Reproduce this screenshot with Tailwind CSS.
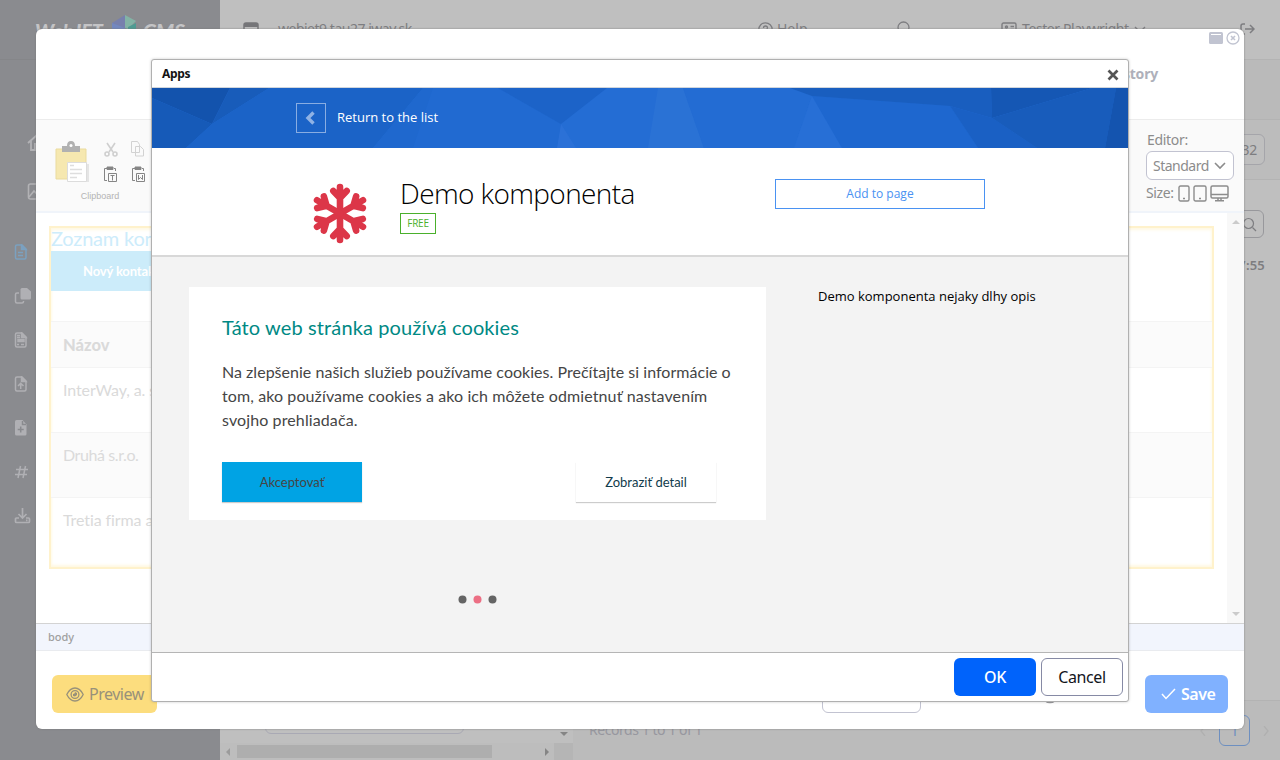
<!DOCTYPE html>
<html lang="en">
<head>
<meta charset="utf-8">
<title>WebJET CMS</title>
<script src="https://cdn.jsdelivr.net/npm/@tailwindcss/browser@4"></script>
</head>
<body class="relative h-[760px] w-[1280px] overflow-hidden bg-[#bfbfbf] font-['Noto_Sans','Open_Sans',sans-serif] text-sm">

<!-- Page under the dialogs -->
<div class="flex h-full">
  <aside class="flex w-[220px] shrink-0 flex-col bg-[#8a8b8f]">
    <div class="flex h-[60px] items-start border-b border-[#858689] pt-[15px] pl-[35px]">
      <svg width="152" height="26" viewBox="0 0 152 26"><g font-family="Lato" font-style="italic" font-weight="900" font-size="19" fill="#c4c4c6"><text x="0" y="23" textLength="68" lengthAdjust="spacingAndGlyphs">WebJET</text><text x="108" y="23" textLength="42" lengthAdjust="spacingAndGlyphs">CMS</text></g><path d="M90 0 77 8v12l13-7z" fill="#7780ad"/><path d="M90 0l11 6-8 8-3-1z" fill="#83b3a5"/><path d="M77 8l13 5v10l-13-5z" fill="#7388c0"/><path d="M93 12l8-4v8l-8 5z" fill="#4e9b92"/></svg>
    </div>
    <div class="flex flex-col gap-[30px] pt-[73px] pl-[27px] text-[#b2b2b5]">
      <svg width="22" height="20" viewBox="0 0 22 20" fill="none" stroke="currentColor" stroke-width="1.800"><path d="M1 10 10 2l9 8M4 8v9h4v-6h4v6h4V8"/></svg>
      <svg width="20" height="18" viewBox="0 0 20 18" fill="none" stroke="currentColor" stroke-width="1.600"><rect x="1.500" y="1" width="17" height="15" rx="2"/><path d="m2 14 5-6 4 4 3-3 5 5"/></svg>
    </div>
    <div class="flex flex-col gap-7 pt-[43px] pl-[14px] text-[#b0b0b4]">
      <svg class="text-[#7ba1c0]" width="16" height="16" viewBox="0 0 16 16" fill="none" stroke="currentColor" stroke-width="1.500"><path d="M3 1h5l4 4v8.500q0 1.500-1.500 1.500H3q-1.500 0-1.500-1.500v-11Q1.500 1 3 1zM4 8.500h5M4 11.500h5"/><path d="M7.500 1v4.500H12z" fill="currentColor"/></svg>
      <svg width="17" height="16" viewBox="0 0 17 16" fill="currentColor"><path d="M8 0h5l4 3.500V10q0 1.500-1.500 1.500H8Q6.500 11.500 6.500 10V1.500Q6.500 0 8 0z"/><path d="M5 5H3q-1.500 0-1.500 1.500v7Q1.500 15 3 15h5q1.500 0 1.500-1.500V13" fill="none" stroke="currentColor" stroke-width="1.500"/></svg>
      <svg width="16" height="16" viewBox="0 0 16 16" fill="none" stroke="currentColor" stroke-width="1.500"><path d="M3 1h5l4 4v8.500q0 1.500-1.500 1.500H3q-1.500 0-1.500-1.500v-11Q1.500 1 3 1zM3 3.500h3M3 5.500h3M3 12.500h2M7 12.500h3"/><path d="M4 7.500h6v2H4z" fill="currentColor"/><path d="M7.500 1v4.500H12z" fill="currentColor"/></svg>
      <svg width="16" height="16" viewBox="0 0 16 16" fill="none" stroke="currentColor" stroke-width="1.500"><path d="M3 1h5l4 4v8.500q0 1.500-1.500 1.500H3q-1.500 0-1.500-1.500v-11Q1.500 1 3 1zM6.700 13V7.500M4 10l2.700-2.700L9.500 10"/><path d="M7.500 1v4.500H12z" fill="currentColor"/></svg>
      <svg width="16" height="16" viewBox="0 0 16 16"><path d="M2.500 0h6l4 4.500v9.500q0 1.500-1.500 1.500H2.500Q1 15.500 1 14V1.500Q1 0 2.500 0z" fill="currentColor"/><path d="M8.500 1v3.500H12M6.700 6.500v6M3.700 9.500h6" stroke="#8a8b8f" stroke-width="1.500" fill="none"/></svg>
      <svg width="16" height="16" viewBox="0 0 16 16" fill="none" stroke="currentColor" stroke-width="1.500"><path d="M2 5.500h12M1 10.500h12M6.500 2l-2.500 12M11.500 2 9 14"/></svg>
      <svg width="17" height="16" viewBox="0 0 17 16" fill="none" stroke="currentColor" stroke-width="1.700"><path d="M8.500 0v9.500M4.500 6l4 4 4-4M5 10H2.500Q1.500 10 1.500 11v2.500q0 1 1 1h12q1 0 1-1V11q0-1-1-1H12M12 12.400h1.500"/></svg>
    </div>
  </aside>
  <main class="flex flex-1 flex-col bg-[#bababa] text-[#7d7d80]">
    <header class="flex h-[60px] shrink-0 items-start border-b border-[#b3b3b3] bg-[#bfbfbf] pt-[19px] pl-[23px]">
      <svg class="mt-[3px] w-[16px] shrink-0" height="16" viewBox="0 0 16 16"><rect x="1" y="1" width="14" height="13" rx="2" fill="none" stroke="#757578" stroke-width="1.500"/><path d="M1 1h14v4H1z" fill="#757578"/></svg>
      <span class="ml-[19px] w-[480px] tracking-[-0.500px]">webjet9.tau27.iway.sk</span>
      <svg class="mt-[3px] mr-[4px] shrink-0" width="15" height="15" viewBox="0 0 15 15" fill="none" stroke="currentColor" stroke-width="1.300"><circle cx="7.500" cy="7.500" r="6.700"/><path d="M5.500 6q0-2 2-2t2 2q0 1-2 2v1M7.500 10.500v1.500"/></svg>
      <span class="w-[120px]">Help</span>
      <svg class="mt-[2px] shrink-0" width="16" height="16" viewBox="0 0 16 16" fill="none" stroke="currentColor" stroke-width="1.300"><circle cx="6.500" cy="6.500" r="5.500"/><path d="m11 11 4 4"/></svg>
      <svg class="mt-[3px] mr-[5px] ml-[88px] shrink-0" width="16" height="14" viewBox="0 0 16 14" fill="none" stroke="currentColor" stroke-width="1.400"><rect x="1" y="1" width="14" height="12" rx="1.500"/><circle cx="5.500" cy="5" r="1"/><path d="M3.500 9h4M9.500 4.500H13M9.500 7.500H13"/></svg>
      <span class="tracking-[-0.400px]">Tester Playwright</span>
      <svg class="mt-[7px] ml-[5px] shrink-0" width="12" height="8" viewBox="0 0 12 8" fill="none" stroke="currentColor" stroke-width="1.400"><path d="m1 1 5 5 5-5"/></svg>
      <svg class="mt-[4px] mr-[25px] ml-auto shrink-0" width="15" height="13" viewBox="0 0 15 13" fill="none" stroke="currentColor" stroke-width="1.500"><path d="M5 1H3Q1 1 1 3v6q0 2 2 2h2M5 6h9M10 2l4 4-4 4"/></svg>
    </header>
    <div class="h-[60px] shrink-0 border-b border-[#b3b3b3]"></div>
    <div class="flex h-[60px] shrink-0 items-center justify-end border-b border-[#b3b3b3] bg-[#bcbcbc] pr-[15px]"><span class="flex h-[31px] w-[60px] items-center justify-end rounded-md border border-[#a5a5aa] bg-[#bfbfbf] pr-[7px] tracking-[-0.300px]">32</span></div>
    <div class="flex flex-1 flex-col items-end bg-[#bfbfbf] pt-[30px] pr-[16px]">
      <span class="flex h-[28px] w-[40px] items-center justify-end rounded-md border border-[#98989c] pr-[6px]"><svg width="15" height="15" viewBox="0 0 15 15" fill="none" stroke="currentColor" stroke-width="1.200"><circle cx="6.500" cy="6.500" r="5"/><path d="m10.500 10.500 3.500 3.500"/></svg></span>
      <span class="mt-[17px] -mr-px text-[13px] leading-5 font-semibold tracking-[0.200px]">17:55</span>
    </div>
    <div class="flex h-[60px] shrink-0 border-t border-[#b3b3b3] bg-[#bbbbbb]">
      <div class="flex w-[353px] shrink-0 flex-col">
        <div class="flex h-[42px] items-end bg-[#bfbfbf] pb-[9px]">
          <div class="ml-[45px] h-[28px] w-[199px] rounded-md border border-[#a9a9b4]"></div>
          <svg class="mb-[-3px] ml-auto mr-[5px]" width="8" height="5" viewBox="0 0 8 5"><path d="M0 0h8L4 4z" fill="#858585"/></svg>
        </div>
        <div class="flex flex-1 items-center bg-[#bdbdbd]">
          <svg class="ml-[6px]" width="4" height="8" viewBox="0 0 4 8"><path d="M4 0v8L0 4z" fill="#9b9b9b"/></svg>
          <div class="ml-[7px] h-[13px] w-[255px] bg-[#aeaeae]"></div>
          <svg class="ml-auto mr-[5px]" width="4" height="8" viewBox="0 0 4 8"><path d="M0 0v8l4-4z" fill="#858585"/></svg>
          <div class="h-full w-[19px] bg-[#b5b5b5]"></div>
        </div>
      </div>
      <span class="mt-[19px] ml-[16px] text-[14px] tracking-[-0.450px] text-[#97979f]">Records 1 to 1 of 1</span>
      <div class="mt-[14px] ml-auto flex items-center gap-[13px] self-start pr-[11px]">
        <svg width="6" height="10" viewBox="0 0 6 10" fill="none" stroke="#b0b0b0" stroke-width="1.300"><path d="M5 0 1 5l4 5"/></svg>
        <span class="flex h-[31px] w-[31px] items-center justify-center rounded-md border border-[#6d8fc0] text-[#6d8fc0]">1</span>
        <svg width="6" height="10" viewBox="0 0 6 10" fill="none" stroke="#b0b0b0" stroke-width="1.300"><path d="m1 0 4 5-4 5"/></svg>
      </div>
    </div>
  </main>
</div>

<!-- Editor dialog -->
<section class="absolute top-[29px] left-[36px] flex h-[700px] w-[1208px] flex-col overflow-hidden rounded-md bg-white shadow-[0_0_2px_#777]">
  <header class="h-[90px] shrink-0">
    <div class="flex justify-end gap-[3px] pt-[2px] pr-[4.500px]">
      <svg width="14" height="14" viewBox="0 0 14 14"><rect y="1" width="14" height="12" rx="1.500" fill="#c1c4d1"/><path d="M2 3.500h10" stroke="#fff"/></svg>
      <svg width="14" height="14" viewBox="0 0 14 14" fill="none" stroke="#c1c4d1" stroke-width="1.300"><circle cx="7" cy="7" r="6"/><path d="m5 5 4 4m0-4-4 4" stroke-width="1.600"/></svg>
    </div>
    <div class="flex justify-end pt-[19px] pr-[86px] text-[14px] leading-5 font-bold tracking-[-0.200px] text-[#aeb0ba]">History</div>
  </header>
  <div class="flex h-[94px] shrink-0 justify-between border-t border-b-2 border-t-[#ececec] border-b-[#f0f4fa] bg-[#fafafa]">
    <div class="flex w-[128px] flex-col pt-[21px]">
      <div class="flex gap-[14px] pl-[19px]">
        <svg class="shrink-0" width="34" height="42" viewBox="0 0 34 42"><path d="M1 8h30v30H1z" fill="#f6e8b0" stroke="#eadb9e"/><path d="M7 5h5q0-5 4-5t4 5h5v6H7z" fill="#b1b1b1"/><circle cx="16" cy="4.500" r="1.500" fill="#fff"/><path d="M14 23h20v18H14z" fill="#e5e5e5"/><path d="M12.500 21.500h19v19h-19z" fill="#fff" stroke="#dcdcdc"/><path d="M15 24.500h4M15 28.500h12M15 32.500h12M15 36.500h7" stroke="#dedede" stroke-width="1.500"/></svg>
        <div class="grid grid-cols-[16px_16px] gap-x-[12px] gap-y-[8px]">
          <svg width="16" height="17" viewBox="0 0 16 17" fill="none" stroke="#cfcfcf" stroke-width="1.600"><path d="m4 2 6 9M12 2l-6 9"/><circle cx="4" cy="13" r="2"/><circle cx="12" cy="13" r="2"/></svg>
          <svg width="16" height="17" viewBox="0 0 16 17" fill="#fafafa" stroke="#d2d2d2"><path d="M.500.500h6l2 3v8h-8zM4.500 5.500h5l3 3v6.500h-8z"/></svg>
          <svg width="16" height="17" viewBox="0 0 16 17" fill="none" stroke="#858585"><path d="M4 2.500H1.500v12H4M11 2.500h1.500V5"/><path d="M4 1h6v2.500H4z" fill="#858585"/><path d="M5.500 7.500h8v8h-8zM7.500 9.500h4M9.500 9.500v5"/></svg>
          <svg width="16" height="17" viewBox="0 0 16 17" fill="none" stroke="#858585"><path d="M4 2.500H1.500v12H4M11 2.500h1.500V5"/><path d="M4 1h6v2.500H4z" fill="#858585"/><path d="M5.500 7.500h8v8h-8zM7.500 9v4.500l2-2 2 2V9"/></svg>
        </div>
      </div>
      <span class="mt-[7px] text-center text-[9px] leading-3 font-['Liberation_Sans',Arial,sans-serif] text-[#b4b4b4]">Clipboard</span>
    </div>
    <div class="flex w-[98px] flex-col pt-[11px] text-[14px] leading-[18px] text-[#8c8c8c]">
      <span class="pl-px tracking-[-0.300px]">Editor:</span>
      <span class="mt-[2px] flex h-[29px] w-[88px] items-center justify-between rounded-md border border-[#c2c3d1] bg-white pr-[7px] pl-[6px] tracking-[-0.500px]">Standard<svg width="12" height="8" viewBox="0 0 12 8" fill="none" stroke="currentColor" stroke-width="1.600"><path d="m1 1 5 5 5-5"/></svg></span>
      <span class="mt-[4px] flex items-center gap-[3px] tracking-[-0.400px]">Size:
        <svg class="ml-px" width="12" height="17" viewBox="0 0 12 17" fill="none" stroke="currentColor" stroke-width="1.400"><rect x="1" y="1" width="10" height="15" rx="1.500"/><path d="M5 13.500h2"/></svg>
        <svg width="14" height="17" viewBox="0 0 14 17" fill="none" stroke="currentColor" stroke-width="1.400"><rect x="1" y="1" width="12" height="15" rx="1.500"/><path d="M6 13.500h2"/></svg>
        <svg width="19" height="17" viewBox="0 0 19 17" fill="none" stroke="currentColor" stroke-width="1.500"><rect x="1" y="1" width="17" height="12" rx="1.500"/><path d="M1 9.500h17M8 13v3M11 13v3M5 15.800h9"/></svg>
      </span>
    </div>
  </div>
  <div class="flex h-[410px] shrink-0">
    <div class="flex-1 pt-[13px] pr-[13px] pl-[13px] font-[Lato,'Noto_Sans',sans-serif] text-[#dadada]">
      <div class="flex h-[343px] flex-col border-2 border-[#fff2cc] shadow-[inset_0_2px_3px_#fff8e2,inset_0_-2px_3px_#fff8e2]">
        <h1 class="h-[23px] text-[20px] leading-[21px] tracking-[-0.200px] text-[#cdecfb]">Zoznam kontaktov</h1>
        <div class="h-[40px] w-[166px] bg-[#ccecfa] pl-[32px] text-[13px] leading-10 font-bold tracking-[-0.150px] text-white">Nový kontakt</div>
        <div class="mt-[30px] h-[47px] border-y border-[#f4f4f4] bg-[#fbfbfb] pl-[12px] text-[16.500px] leading-[46px] font-black">Názov</div>
        <div class="h-[64px] pt-[10px] pl-[12px] text-[16px] leading-6 tracking-[-0.100px]">InterWay, a. s.</div>
        <div class="h-[66px] border-y border-[#f4f4f4] bg-[#fbfbfb] pt-[10px] pl-[12px] text-[16px] leading-6 tracking-[-0.400px]">Druhá s.r.o.</div>
        <div class="pt-[10px] pl-[12px] text-[16px] leading-6 tracking-[-0.100px]">Tretia firma a.s.</div>
      </div>
    </div>
    <div class="flex w-[17px] flex-col items-center justify-between bg-[#f8f8f8] py-[7px]">
      <svg width="8" height="4" viewBox="0 0 8 4"><path d="M0 4 4 0l4 4z" fill="#cbcbcb"/></svg>
      <svg width="8" height="4" viewBox="0 0 8 4"><path d="M0 0h8L4 4z" fill="#cbcbcb"/></svg>
    </div>
  </div>
  <div class="h-[28px] shrink-0 border-t border-b border-t-[#d3d3d3] border-b-[#e9ebef] bg-[#f2f5fd] pl-[12px] text-[11px] leading-[26px] font-medium text-[#a0a0a0]">body</div>
  <footer class="flex flex-1 items-start pt-[24px] pr-[16px] pl-[16px] text-[16px]">
    <span class="flex h-[38px] w-[105px] items-center gap-[5px] rounded-md bg-[#fcdd7e] pl-[14px] tracking-[-0.500px] text-[#98917a]"><svg width="18" height="15" viewBox="0 0 18 15" fill="none" stroke="currentColor" stroke-width="1.300"><path d="M.8 7.500Q4 1 9 1t8.200 6.500Q14 14 9 14T.8 7.500z"/><circle cx="9" cy="7.500" r="3.900"/><path d="M7 7q2 0 2-2l2 1v2L9 9.500 7 9z" fill="currentColor" stroke="none"/></svg>Preview</span>
    <span class="ml-[665px] h-[38px] w-[99px] rounded-md border border-[#c2c3d1]"></span>
    <svg class="mt-[9px] ml-[119px]" width="20" height="20" viewBox="0 0 20 20" fill="none" stroke="#9a9a9e" stroke-width="1.500"><circle cx="10" cy="10" r="8.500"/></svg>
    <span class="ml-auto flex h-[38px] w-[83px] items-center gap-[5px] rounded-md bg-[#80b1ff] pl-[16px] font-semibold tracking-[-0.500px] text-white"><svg width="15" height="12" viewBox="0 0 15 12" fill="none" stroke="currentColor" stroke-width="1.500"><path d="m1 6 4 4.500L14 1"/></svg>Save</span>
  </footer>
</section>

<!-- Apps dialog -->
<section class="absolute top-[59px] left-[151px] flex h-[643px] w-[978px] flex-col overflow-hidden rounded-[3px] border border-[#b0b0b0] bg-white text-black shadow-[0_0_3px_rgba(0,0,0,0.2)]">
  <header class="flex h-[28px] shrink-0 items-center justify-between border-b border-[#d1d6dc] pr-[9px] pl-[10px]">
    <span class="text-[12px] font-bold tracking-[-0.300px] text-[#141414]">Apps</span>
    <svg class="mt-[2px]" width="12" height="12" viewBox="0 0 12 12" stroke="#555" stroke-width="2.700"><path d="m1.500 1.500 9 9M10.500 1.500l-9 9"/></svg>
  </header>
  <div class="relative h-[60px] shrink-0 bg-[#1c64c9]">
    <svg class="absolute inset-0" width="976" height="60" viewBox="0 0 976 60">
      <path d="M0 0h976v60H0z" fill="#246dd4"/>
      <path d="M0 0h78L60 36 0 10z" fill="#1353ad"/><path d="M0 10l60 26-26 24H0z" fill="#165ab8"/><path d="M78 0h39L60 36z" fill="#185cba"/>
      <path d="M60 36 117 0h154l-50 60H34z" fill="#1b63c7"/><path d="M271 0h75l63 36-4 24H221z" fill="#1f68ce"/><path d="M281 0h65l63 36-4 24H261z" fill="#216ad1"/>
      <path d="M346 0h109l-46 36z" fill="#1c63c8"/><path d="m409 36-4 24h19z" fill="#2b71d7"/>
      <path d="M506 0h25l21 60h-56z" fill="#2a72d5"/><path d="M531 0h107l22 8-18 52h-90z" fill="#236cd3"/><path d="m660 8 30 52h-48z" fill="#276fd6"/>
      <path d="m660 8 138 10 28 42H690z" fill="#1e67cf"/><path d="M638 0h201l1 30-42-12L660 8z" fill="#195ebf"/><path d="m798 18 42 12 45 30h-59z" fill="#1a60c4"/>
      <path d="M839 0h101L840 30z" fill="#1557b4"/><path d="m840 30 100-30h24l-11 60h-68z" fill="#185cbb"/><path d="M964 0h12v60h-23z" fill="#1454af"/>
    </svg>
    <div class="relative flex h-full items-center pl-[144px]">
      <span class="flex h-[30px] w-[30px] items-center justify-center border border-[#89ade2] pr-[2px]"><svg width="10" height="14" viewBox="0 0 10 14" fill="none" stroke="#8fb2e5" stroke-width="3.400"><path d="M8.500 1.500 3 7l5.500 5.500"/></svg></span>
      <span class="ml-[11px] pb-[2px] font-['Open_Sans',sans-serif] text-[13px] text-white">Return to the list</span>
    </div>
  </div>
  <div class="flex h-[109px] shrink-0 items-start border-b-2 border-[#d8d8d8] pl-[161px] font-['Open_Sans',sans-serif]">
    <svg class="mt-[35px]" width="54" height="61" viewBox="-27 -30.500 54 61" fill="none" stroke="#dc3648" stroke-width="6.600" stroke-linecap="round"><g id="arm"><path d="M0 0v-26.500M0-15.500l-6.700-7M0-15.500l6.700-7"/></g><use href="#arm" transform="rotate(60)"/><use href="#arm" transform="rotate(120)"/><use href="#arm" transform="rotate(180)"/><use href="#arm" transform="rotate(240)"/><use href="#arm" transform="rotate(300)"/></svg>
    <div class="ml-[33px] w-[375px] pt-[27px]">
      <h2 class="text-[28px] leading-9 font-light tracking-[-0.620px]">Demo komponenta</h2>
      <span class="mt-[2px] flex h-[21px] w-[36px] items-center justify-center border border-[#4ab02c] text-[10px] tracking-[-0.200px] text-[#4ab02c]">FREE</span>
    </div>
    <span class="mt-[31px] flex h-[30px] w-[210px] items-center justify-center border border-[#4a92f2] text-[12px] text-[#4a92f2]">Add to page</span>
  </div>
  <div class="flex h-[395px] shrink-0 bg-[#f3f3f3] pt-[30px] pl-[37px]">
    <div class="flex w-[577px] flex-col font-[Lato,'Noto_Sans',sans-serif]">
      <article class="h-[233px] bg-white pt-[27px] pr-[25px] pl-[33px] text-[#454545]">
        <h3 class="text-[20px] leading-[26px] tracking-[0.120px] text-[#008984]">Táto web stránka používá cookies</h3>
        <p class="mt-[20px] text-[16px] leading-6 tracking-[0.025px] whitespace-nowrap">Na zlepšenie našich služieb používame cookies. Prečítajte si informácie o<br><span class="tracking-[0.100px]">tom, ako používame cookies a ako ich môžete odmietnuť nastavením</span><br><span class="tracking-[0.110px]">svojho prehliadača.</span></p>
        <div class="mt-[30px] flex justify-between pr-[25px] text-[13px]">
          <span class="flex h-10 w-[140px] items-center justify-center bg-[#00a3e4] shadow-[0_1px_1px_#ccc]">Akceptovať</span>
          <span class="flex h-10 w-[140px] items-center justify-center bg-white text-[#103b4b] shadow-[0_1px_1px_#ccc]">Zobraziť detail</span>
        </div>
      </article>
      <div class="mt-[75px] flex justify-center pr-px"><svg width="40" height="9" viewBox="0 0 40 9"><circle cx="5.500" cy="4.500" r="4" fill="#646464"/><circle cx="20.500" cy="4.500" r="4" fill="#ec6f84"/><circle cx="35.500" cy="4.500" r="4" fill="#646464"/></svg></div>
    </div>
    <p class="ml-[52px] font-['Open_Sans',sans-serif] text-[13px] leading-[19px]">Demo komponenta nejaky dlhy opis</p>
  </div>
  <footer class="flex flex-1 items-center justify-end gap-[5px] border-t border-[#b5b5b5] pr-[5px] text-[16px]">
    <span class="flex h-[38px] w-[82px] items-center justify-center rounded-md bg-[#0063fb] font-medium tracking-[-0.400px] text-white">OK</span>
    <span class="flex h-[38px] w-[82px] items-center justify-center rounded-md border border-[#868aa5] tracking-[-0.400px] text-[#13151b]">Cancel</span>
  </footer>
</section>
</body>
</html>
